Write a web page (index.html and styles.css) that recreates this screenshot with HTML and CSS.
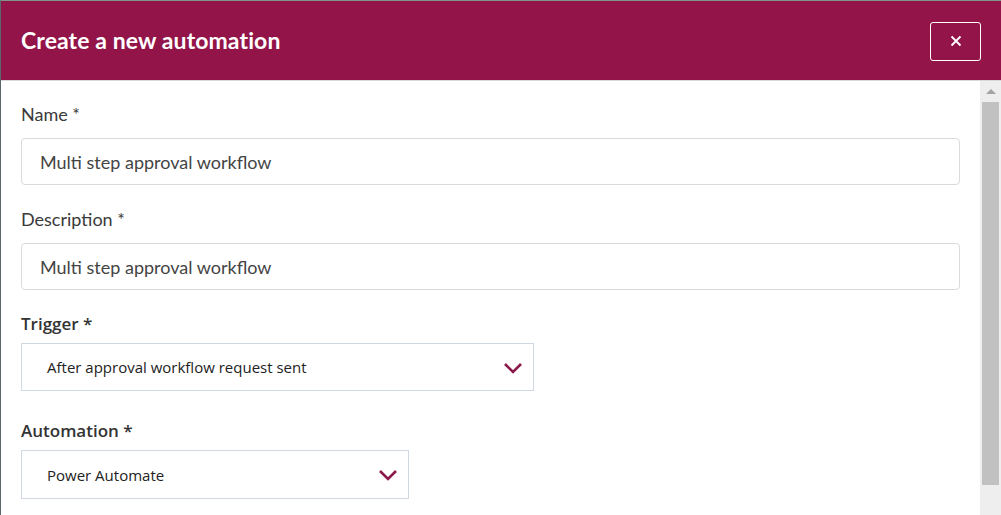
FILE: index.html
```html
<!DOCTYPE html>
<html>
<head>
<meta charset="utf-8">
<link rel="stylesheet" href="styles.css">
</head>
<body>
<div class="modal">
  <header class="modal-header">
    <h1 class="title">Create a new automation</h1>
    <button class="close" aria-label="Close">
      <svg width="12" height="12" viewBox="0 0 12 12"><path d="M1.5 1.5 L10.5 10.5 M10.5 1.5 L1.5 10.5" stroke="#fff" stroke-width="1.8" fill="none"/></svg>
    </button>
  </header>
  <div class="modal-body">
    <div class="content">
      <div class="field">
        <label class="label">Name *</label>
        <div class="input">Multi step approval workflow</div>
      </div>
      <div class="field field-desc">
        <label class="label">Description *</label>
        <div class="input">Multi step approval workflow</div>
      </div>
      <div class="field field-select">
        <label class="label label-alt">Trigger *</label>
        <div class="select select-wide">
          <span>After approval workflow request sent</span>
          <svg class="chev" width="20" height="12" viewBox="0 0 20 12"><path d="M2 2 L10 10 L18 2" stroke="#8b1a4a" stroke-width="2.6" fill="none"/></svg>
        </div>
      </div>
      <div class="field field-select">
        <label class="label label-alt">Automation *</label>
        <div class="select select-narrow">
          <span>Power Automate</span>
          <svg class="chev" width="20" height="12" viewBox="0 0 20 12"><path d="M2 2 L10 10 L18 2" stroke="#8b1a4a" stroke-width="2.6" fill="none"/></svg>
        </div>
      </div>
    </div>
    <div class="scrollbar">
      <div class="arrow"></div>
      <div class="thumb"></div>
    </div>
  </div>
</div>
</body>
</html>
```
FILE: styles.css
```css
html, body {
  margin: 0;
  padding: 0;
  background: #fff;
}
body {
  width: 1001px;
  height: 515px;
  overflow: hidden;
  font-family: "Lato", "Noto Sans", sans-serif;
}
.modal {
  box-sizing: border-box;
  width: 1001px;
  height: 515px;
  border-top: 1px solid #7f9488;
  border-left: 1px solid #5d676b;
  display: flex;
  flex-direction: column;
}
.modal-header {
  height: 79px;
  background: #921448;
  border-bottom: 1px solid #d9d9d9;
  display: flex;
  align-items: center;
  justify-content: space-between;
  padding: 0 20px 0 20px;
  flex-shrink: 0;
}
.title {
  margin: 0 0 2px 0;
  color: #fff;
  font-family: "Lato", sans-serif;
  font-weight: 700;
  font-size: 23px;
  letter-spacing: 0.1px;
}
.close {
  width: 51px;
  height: 39px;
  background: transparent;
  border: 1px solid #fff;
  border-radius: 3px;
  display: flex;
  align-items: center;
  justify-content: center;
  padding: 0;
  margin-top: 1px;
}
.modal-body {
  flex: 1;
  display: flex;
  overflow: hidden;
}
.content {
  flex: 1;
  padding: 21px 20px 0 20px;
}
.field {
  margin-bottom: 22px;
}
.field-desc {
  margin-bottom: 22px;
}
.label {
  display: block;
  font-family: "Lato", sans-serif;
  font-size: 18px;
  color: #3a3a3a;
  height: 24px;
  line-height: 24px;
  margin-bottom: 12px;
}
.label-alt {
  font-family: "Open Sans", sans-serif;
  font-weight: 600;
  font-size: 17px;
  color: #333;
  margin-bottom: 7px;
}
.input {
  box-sizing: border-box;
  height: 47px;
  border: 1px solid #dadada;
  border-radius: 4px;
  padding: 0 18px;
  display: flex;
  align-items: center;
  font-family: "Lato", sans-serif;
  font-size: 18px;
  color: #444;
}
.field-select {
  margin-bottom: 28px;
}
.select {
  box-sizing: border-box;
  height: 49px;
  border: 1px solid #cfd8e3;
  display: flex;
  align-items: center;
  justify-content: space-between;
  padding: 0 10px 0 25px;
  font-family: "Open Sans", sans-serif;
  font-size: 15px;
  color: #222;
}
.select-wide { width: 513px; height: 48px; }
.select-narrow { width: 388px; }
.chev { margin-top: 1px; }
.scrollbar {
  width: 21px;
  background: #eeeeee;
  display: flex;
  flex-direction: column;
  align-items: center;
}
.arrow {
  width: 0;
  height: 0;
  border-left: 5px solid transparent;
  border-right: 5px solid transparent;
  border-bottom: 5px solid #a3a3a3;
  margin-top: 8px;
  margin-bottom: 8px;
}
.thumb {
  width: 17px;
  height: 383px;
  background: #c1c1c1;
}
```
